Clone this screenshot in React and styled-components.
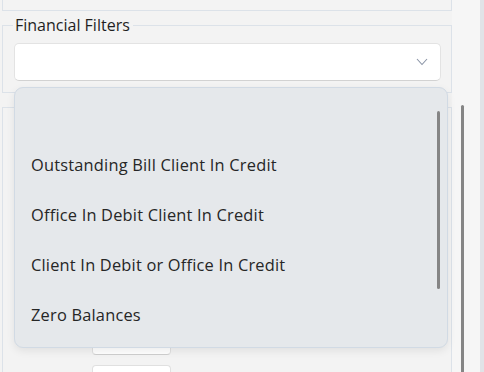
import React from "react";
import styled, { createGlobalStyle } from "styled-components";

const GlobalStyle = createGlobalStyle`
    html, body {
        margin: 0;
        padding: 0;
        background: #f3f3f3;
        font-family: "Open Sans", "Noto Sans", sans-serif;
        color: #262626;
    }
    * { box-sizing: border-box; }
`;

const options = [
    "",
    "Outstanding Bill Client In Credit",
    "Office In Debit Client In Credit",
    "Client In Debit or Office In Credit",
    "Zero Balances",
];

const App = () => {
    return (
        <>
            <GlobalStyle />
            <Page>
                <Main>
                    <TopBox />
                    <Filters>
                        <Legend>Financial Filters</Legend>
                        <SelectWrap>
                            <Select>
                                <svg width="12" height="8" viewBox="0 0 12 8">
                                    <polyline points="1,1 6,6.5 11,1" fill="none" stroke="#8a94a6" strokeWidth="1.1" />
                                </svg>
                            </Select>
                            <Menu>
                                {options.map((opt, i) => (
                                    <Option key={i}>{opt}</Option>
                                ))}
                                <MenuThumb />
                            </Menu>
                        </SelectWrap>
                    </Filters>
                    <Section>
                        <Field />
                        <Field />
                    </Section>
                </Main>
                <Gutter>
                    <Thumb />
                </Gutter>
                <Edge />
            </Page>
        </>
    );
};

const Page = styled.div`
    display: flex;
    height: 372px;
    overflow: hidden;
`;

const Main = styled.div`
    width: 452px;
    padding-left: 2px;
    display: flex;
    flex-direction: column;
`;

const TopBox = styled.div`
    height: 11px;
    border: 1px solid #dce2e9;
    border-top: none;
    flex-shrink: 0;
`;

const Filters = styled.fieldset`
    margin: 3px 0 0;
    padding: 7px 10px 10px 11px;
    border: 1px solid #dce2e9;
    height: 79px;
    flex-shrink: 0;
`;

const Legend = styled.legend`
    padding: 0 3px 0 2px;
    margin-left: -1px;
    font-size: 16px;
    line-height: 22px;
    color: #1f1f1f;
`;

const SelectWrap = styled.div`
    position: relative;
`;

const Select = styled.div`
    height: 38px;
    background: #fff;
    border: 1px solid #e3e3e3;
    border-bottom-color: #d2d2d2;
    border-radius: 5px;
    display: flex;
    align-items: center;
    justify-content: flex-end;
    padding-right: 12px;
`;

const Menu = styled.div`
    position: absolute;
    top: 44px;
    left: 0;
    width: 434px;
    height: 261px;
    background: #e5e8eb;
    border: 1px solid #d1dae4;
    border-radius: 9px;
    box-shadow: 0 3px 8px rgba(0, 0, 0, 0.08);
    padding-top: 1px;
    z-index: 5;
`;

const Option = styled.div`
    height: 50px;
    display: flex;
    align-items: center;
    padding-left: 16px;
    font-size: 16.4px;
    letter-spacing: 0.2px;
    color: #262626;
`;

const MenuThumb = styled.div`
    position: absolute;
    top: 23px;
    right: 7px;
    width: 3px;
    height: 178px;
    border-radius: 2px;
    background: #858585;
`;

const Section = styled.div`
    margin-top: 14px;
    flex: 1;
    border: 1px solid #dce2e9;
    border-bottom: none;
    padding: 220px 0 0 89px;
    display: flex;
    flex-direction: column;
    gap: 10px;
`;

const Field = styled.div`
    width: 79px;
    height: 27px;
    flex-shrink: 0;
    background: #fff;
    border: 1px solid #e0e0e0;
    border-bottom-color: #cfcfcf;
    border-radius: 4px;
`;

const Gutter = styled.div`
    width: 28px;
    background: #f6f6f6;
    padding: 105px 0 0 9px;
`;

const Thumb = styled.div`
    width: 3px;
    height: 280px;
    background: #858585;
    border-radius: 2px;
`;

const Edge = styled.div`
    width: 4px;
    background: #e1e3e7;
`;

export default App;
